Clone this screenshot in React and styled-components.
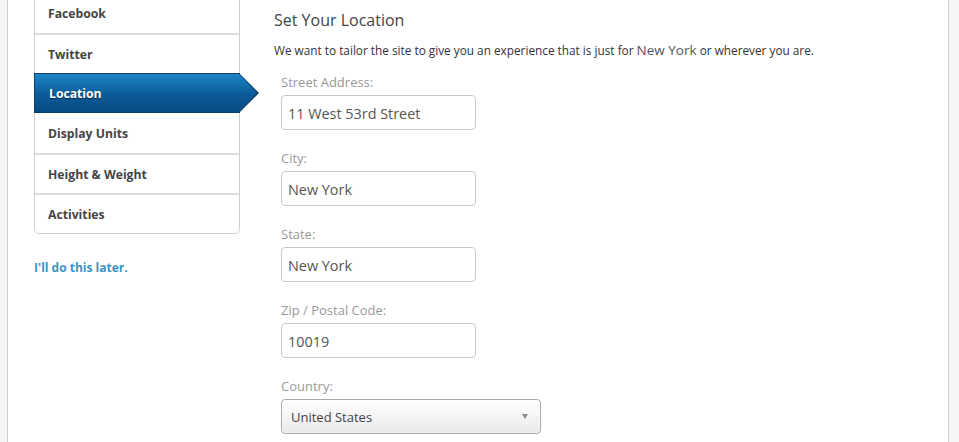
import React from "react";
import styled, { createGlobalStyle } from "styled-components";

const GlobalStyle = createGlobalStyle`
  html, body {
    margin: 0;
    height: 100%;
    background: #f5f5f5;
    font-family: "Open Sans", "Liberation Sans", sans-serif;
  }
  #root {
    height: 100%;
  }
`;

const Page = styled.div`
  height: 100%;
  margin: 0 10px 0 7px;
  background: #fff;
  border-left: 1px solid #d0d0d0;
  border-right: 1px solid #d0d0d0;
  overflow: hidden;
  display: grid;
  grid-template-columns: 206px 1fr;
  column-gap: 34px;
  padding-left: 26px;
`;

const Sidebar = styled.div`
  display: flex;
  flex-direction: column;
`;

const Menu = styled.ul`
  list-style: none;
  margin: -7px 0 0 0;
  padding: 0;
  border: 1px solid #cfcfcf;
  border-top: none;
  border-radius: 0 0 5px 5px;
  background: #fff;
`;

const Item = styled.li`
  position: relative;
  height: 38px;
  line-height: 39px;
  padding-left: 13px;
  border-top: 2px solid #dcdcdc;
  font-size: 12.2px;
  font-weight: 700;
  color: #444;
  &:first-child {
    border-top: none;
    height: 40px;
    line-height: 41px;
  }
  ${(p) =>
    p.$active &&
    `
    margin: 0 -1px;
    padding-left: 14px;
    height: 38px;
    line-height: 39px;
    border: 1px solid #0b3f69;
    color: #fff;
    text-shadow: 0 1px 1px rgba(0,0,0,0.5);
    background: linear-gradient(#1c84c6, #0b5b98 55%, #064a80);
    & + li { border-top: none; height: 40px; line-height: 41px; }
    &::before {
      content: "";
      position: absolute;
      left: 100%;
      top: -1px;
      width: 20px;
      height: 40px;
      background: #0b3f69;
      clip-path: polygon(0 0, 100% 50%, 0 100%);
    }
    &::after {
      content: "";
      position: absolute;
      left: 100%;
      top: 0;
      width: 18px;
      height: 38px;
      background: linear-gradient(#1c84c6, #0b5b98 55%, #064a80);
      clip-path: polygon(0 0, 100% 50%, 0 100%);
    }
  `}
`;

const LaterLink = styled.a`
  margin-top: 25px;
  font-size: 12px;
  font-weight: 700;
  color: #3b94c9;
  text-decoration: none;
`;

const Content = styled.div`
  display: flex;
  flex-direction: column;
  padding-top: 8px;
`;

const Title = styled.h2`
  margin: 0;
  font-size: 16px;
  font-weight: 400;
  color: #444;
  line-height: 24px;
`;

const Intro = styled.p`
  margin: 8px 0 0 0;
  font-size: 11.8px;
  color: #333;
  line-height: 20px;
`;

const City = styled.span`
  font-size: 13.5px;
  color: #555;
`;

const Fields = styled.div`
  display: flex;
  flex-direction: column;
  gap: 21px;
  padding-left: 7px;
  margin-top: 15px;
`;

const Field = styled.label`
  display: flex;
  flex-direction: column;
  gap: 5px;
`;

const Label = styled.span`
  font-size: 13px;
  color: #999;
  line-height: 15px;
`;

const Input = styled.input`
  box-sizing: border-box;
  width: 195px;
  height: 35px;
  padding: 2px 6px 0;
  border: 1px solid #c8c8c8;
  border-radius: 4px;
  font-family: inherit;
  font-size: 14.4px;
  color: #555;
  background: #fff;
  outline: none;
`;

const Select = styled.div`
  box-sizing: border-box;
  width: 260px;
  height: 35px;
  padding: 0 9px;
  display: flex;
  align-items: center;
  justify-content: space-between;
  border: 1px solid #aaa;
  border-radius: 4px;
  font-size: 13px;
  color: #444;
  background: linear-gradient(#fff, #f6f6f6 45%, #e9e9e9);
  box-shadow: inset 0 0 3px #fff;
`;

const Caret = styled.span`
  width: 0;
  height: 0;
  margin-right: 3px;
  border-left: 3px solid transparent;
  border-right: 3px solid transparent;
  border-top: 5px solid #888;
`;

const menu = ["Facebook", "Twitter", "Location", "Display Units", "Height & Weight", "Activities"];

const fields = [
  { label: "Street Address:", value: "11 West 53rd Street" },
  { label: "City:", value: "New York" },
  { label: "State:", value: "New York" },
  { label: "Zip / Postal Code:", value: "10019" },
];

export default function App() {
  return (
    <>
      <GlobalStyle />
      <Page>
        <Sidebar>
          <Menu>
            {menu.map((m) => (
              <Item key={m} $active={m === "Location"}>
                {m}
              </Item>
            ))}
          </Menu>
          <LaterLink href="#">I'll do this later.</LaterLink>
        </Sidebar>
        <Content>
          <Title>Set Your Location</Title>
          <Intro>
            We want to tailor the site to give you an experience that is just for <City>New York</City> or wherever you are.
          </Intro>
          <Fields>
            {fields.map((f) => (
              <Field key={f.label}>
                <Label>{f.label}</Label>
                <Input defaultValue={f.value} />
              </Field>
            ))}
            <Field>
              <Label>Country:</Label>
              <Select>
                United States
                <Caret />
              </Select>
            </Field>
          </Fields>
        </Content>
      </Page>
    </>
  );
}
